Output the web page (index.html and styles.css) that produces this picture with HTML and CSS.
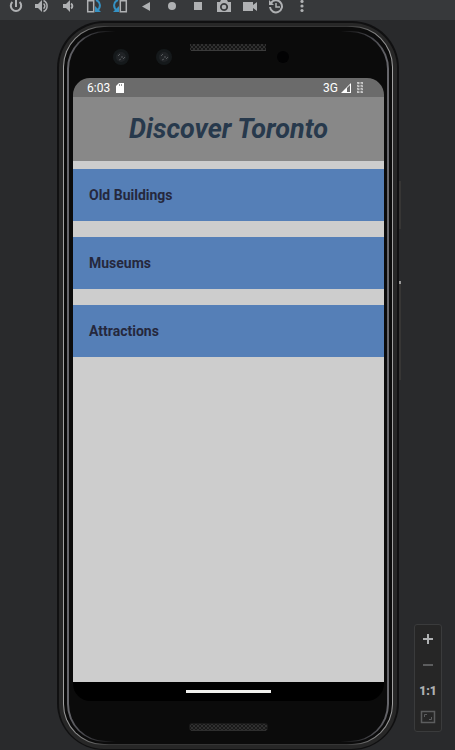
FILE: index.html
```html
<!DOCTYPE html>
<html lang="en">
<head>
<meta charset="utf-8">
<meta name="viewport" content="width=device-width, initial-scale=1">
<title>Android Emulator</title>
<link rel="stylesheet" href="styles.css">
</head>
<body>
<div class="toolbar" role="toolbar" aria-label="Emulator controls">
  <button class="tool" aria-label="Power"><svg viewBox="0 0 16 16"><path class="line" d="M4.400 4A5.200 5.200 0 1 0 11.600 4M8 1v8"/></svg></button>
  <button class="tool" aria-label="Volume up"><svg viewBox="0 0 16 16"><path d="M1 6h3l4-4v12l-4-4H1z"/><path class="line thin" d="M9.500 5.500a3 3 0 0 1 0 5M9.500 2.500a6 6 0 0 1 0 11"/></svg></button>
  <button class="tool" aria-label="Volume down"><svg viewBox="0 0 16 16"><path d="M3 6h3l4-4v12l-4-4H3z"/><path class="line" d="M11 5.500a3 3 0 0 1 0 5"/></svg></button>
  <button class="tool" aria-label="Rotate left"><svg viewBox="0 0 16 16"><path class="line thin" d="M1.700 2.700h6v11h-6z"/><path class="line blue" d="M10 2c5 2 5 8 1 10.500"/><path class="blue-fill" d="M9 8v6h6z"/></svg></button>
  <button class="tool" aria-label="Rotate right"><svg viewBox="0 0 16 16"><path class="line thin" d="M8.300 2.700h6v11h-6z"/><path class="line blue" d="M6 2c-5 2-5 8-1 10.500"/><path class="blue-fill" d="M7 8v6H1z"/></svg></button>
  <button class="tool" aria-label="Back"><svg viewBox="0 0 16 16"><path d="M12 4v9L4 8.500z"/></svg></button>
  <button class="tool" aria-label="Home"><svg viewBox="0 0 16 16"><circle cx="8" cy="8" r="4"/></svg></button>
  <button class="tool" aria-label="Overview"><svg viewBox="0 0 16 16"><path d="M4 4h8v8H4z"/></svg></button>
  <button class="tool" aria-label="Screenshot"><svg viewBox="0 0 16 16"><path fill-rule="evenodd" d="M5 2h6l1 2h3v10H1V4h3zM8 5a4 4 0 1 0 .1 0z"/><circle cx="8" cy="9" r="2.300"/></svg></button>
  <button class="tool" aria-label="Record"><svg viewBox="0 0 16 16"><path d="M1 4h10v3l4-3v9l-4-3v3H1z"/></svg></button>
  <button class="tool" aria-label="Snapshots"><svg viewBox="0 0 16 16"><path class="line" d="M3 5a6 6 0 1 1-1 4"/><path d="M1 2v5h5z"/><path class="line thin" d="M8 5v4h4"/></svg></button>
  <button class="tool" aria-label="More"><svg viewBox="0 0 16 16"><circle cx="8" cy="3.500" r="1.600"/><circle cx="8" cy="8" r="1.600"/><circle cx="8" cy="12.500" r="1.600"/></svg></button>
</div>
<main class="stage">
  <div class="phone">
    <span class="key power"></span>
    <span class="key volume"></span>
    <div class="rim"><div class="edge"><div class="gap"><div class="glint"><div class="face">
      <svg class="sensors" viewBox="0 0 311 46" aria-hidden="true">
        <defs><pattern id="mesh" width="4" height="4" patternUnits="userSpaceOnUse"><path d="M0 0h2v2H0zM2 2h2v2H2z" fill="#303030"/></pattern></defs>
        <rect x="117" y="12" width="76" height="7" rx="1" fill="#151515"/>
        <rect x="117" y="12" width="76" height="6" fill="url(#mesh)"/>
        <path d="M118 18.500h75" stroke="#3b3b3b"/>
        <g id="lens"><circle cx="48" cy="25" r="8" fill="#15191b"/><circle cx="48" cy="25" r="5" fill="#202326"/><path d="M45 24l2-2M48 25h2M46 28l2-1M50 27l2-2" stroke="#54585a"/></g>
        <use href="#lens" x="43"/>
        <circle cx="210" cy="25" r="6" fill="#020203"/>
      </svg>
      <section class="screen">
        <div class="status">
          <span>6:03</span>
          <svg class="sd" viewBox="0 0 8 10"><path d="M3 0h5v10H0V3z" fill="#fff"/><path d="M3.500 1v2M5.500 1v2" stroke="#999"/></svg>
          <span class="network">3G</span>
          <svg class="signal" viewBox="0 0 10 10"><path d="M0 10L10 0v10z" fill="#fff"/><path d="M6 5l3-3v7H6z" fill="#6b6b6b"/></svg>
          <svg class="battery" viewBox="0 0 6 11"><path d="M0 0h6v11H0z" fill="#c8c8c8"/><path d="M0 2l2 1 2-1 2 1M0 5l2 1 2-1 2 1M0 8l2 1 2-1 2 1M3 0v11" stroke="#666" fill="none"/></svg>
        </div>
        <header class="title"><h1>Discover Toronto</h1></header>
        <nav class="list">
          <a href="#buildings">Old Buildings</a>
          <a href="#museums">Museums</a>
          <a href="#attractions">Attractions</a>
        </nav>
        <div class="navbar"><span class="pill"></span></div>
      </section>
      <svg class="chin" viewBox="0 0 311 40" aria-hidden="true">
        <rect x="116" y="22" width="79" height="8" rx="3" fill="#191919"/>
        <rect x="117" y="23" width="77" height="6" fill="url(#mesh)"/>
        <path d="M118 29.500h75" stroke="#2e2e2e"/>
      </svg>
    </div></div></div></div></div>
  </div>
  <div class="zoom" role="group" aria-label="Zoom">
    <button aria-label="Zoom in"><svg viewBox="0 0 16 16"><path d="M7 3h2v4h4v2H9v4H7V9H3V7h4z"/></svg></button>
    <button class="dim" aria-label="Zoom out"><svg viewBox="0 0 16 16"><path d="M3 7h10v2H3z"/></svg></button>
    <button>1:1</button>
    <button class="dim" aria-label="Fit screen"><svg viewBox="0 0 16 16"><path class="line thin" d="M1.500 2.500h13v11h-13z"/><path class="line fine" d="M4.500 8V5.500H7M11.500 8v2.500H9"/></svg></button>
  </div>
</main>
</body>
</html>
```
FILE: styles.css
```css
* { box-sizing: border-box; }

body {
  margin: 0;
  min-height: 100vh;
  display: flex;
  flex-direction: column;
  background: #292a2c;
  font-family: Roboto, "Liberation Sans", sans-serif;
}

button {
  padding: 0;
  border: 0;
  background: none;
  color: inherit;
  font: inherit;
}

svg { display: block; }

.toolbar {
  display: flex;
  align-items: flex-end;
  height: 20px;
  padding: 0 3px 6px;
  overflow: hidden;
  background: #37393b;
  color: #afb1b3;
}

.tool { width: 26px; height: 16px; }

.tool svg,
.zoom svg {
  width: 16px;
  height: 16px;
  margin: 0 auto;
  fill: currentColor;
}

svg .line { fill: none; stroke: currentColor; stroke-width: 2; }
svg .thin { stroke-width: 1.500; }
svg .fine { stroke-width: 1; }
svg .blue { stroke: #3592c4; }
svg .blue-fill { fill: #3592c4; }

.stage {
  position: relative;
  flex: 1;
  display: flex;
  padding: 1px 56px 0 57px;
}

.phone,
.rim,
.edge,
.gap,
.glint,
.face,
.screen {
  flex: 1;
  display: flex;
  flex-direction: column;
}

.phone {
  position: relative;
  padding: 2px 2px 1px;
  border-radius: 47px;
  background: #101011;
}

.rim {
  padding: 3px 4px 4px;
  border-radius: 45px;
  background: #272727;
}

.edge {
  padding: 1px;
  border-radius: 41px;
  background: linear-gradient(to right, #a0a0a0, #888 5%, #363636 14%, #363636 86%, #888 95%, #a0a0a0);
}

.gap {
  padding: 4px 3px 2px;
  border-radius: 40px;
  background: #0b0b0b;
}

.glint {
  padding: 1px 2px;
  border-radius: 38px;
  background: linear-gradient(to right, #68686d, #444449 6%, #0b0b0b 15%, #0b0b0b 85%, #444449 94%, #68686d);
}

.face {
  padding: 0 3px 0 4px;
  border-radius: 37px;
  background: #0b0b0b;
}

.sensors { width: 100%; height: 46px; }
.chin { width: 100%; height: 40px; }

.key {
  position: absolute;
  left: 100%;
  width: 2px;
  background: #373635;
}

.power { top: 160px; height: 48px; }
.volume { top: 260px; height: 99px; border-top: 3px solid #999; }

.screen {
  overflow: hidden;
  border-radius: 17px;
  background: linear-gradient(#6b6b6b 19px, #cdcdcd 19px, #cdcdcd calc(100% - 19px), #000 calc(100% - 19px));
}

.status {
  display: flex;
  align-items: center;
  height: 19px;
  padding: 0 21px 0 14px;
  color: #fff;
  font-size: 12px;
}

.sd { width: 8px; height: 10px; margin-left: 6px; }
.network { margin-left: auto; }
.signal { width: 10px; height: 10px; margin-left: 3px; }
.battery { width: 6px; height: 11px; margin-left: 6px; }

.title {
  display: flex;
  align-items: center;
  justify-content: center;
  height: 64px;
  background: #888;
}

.title h1 {
  margin: 0;
  color: #27394c;
  font-size: 27px;
  font-style: italic;
  font-weight: 700;
  line-height: 32px;
}

.list {
  display: flex;
  flex-direction: column;
  gap: 16px;
  padding-top: 8px;
}

.list a {
  padding: 16px;
  background: #557fb7;
  color: #25283d;
  font-size: 14px;
  font-weight: 700;
  line-height: 20px;
  text-decoration: none;
}

.navbar {
  display: flex;
  align-items: center;
  justify-content: center;
  height: 19px;
  margin-top: auto;
}

.pill { width: 85px; height: 3px; background: #f0f0ee; }

.zoom {
  position: absolute;
  right: 13px;
  bottom: 18px;
  display: flex;
  flex-direction: column;
  width: 28px;
  padding: 1px 0;
  border: 1px solid #3a3b3c;
  border-radius: 3px;
  background: #262626;
  color: #afb1b3;
}

.zoom button {
  height: 26px;
  font-size: 12px;
  font-weight: 900;
}

.zoom .dim { color: #5c5d5e; }
```
